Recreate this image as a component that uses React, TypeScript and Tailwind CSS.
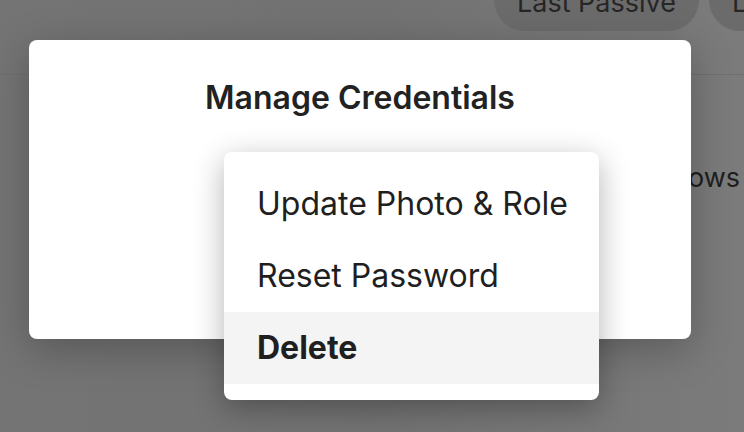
import React from "react";

const font = { fontFamily: "Inter, 'Noto Sans', sans-serif" };

function Pill(props: { label: string }) {
  return (
    <div className="flex h-[62px] shrink-0 items-center whitespace-nowrap rounded-[31px] bg-[#6b6b6b] px-[23px] pt-[6px] text-[27px] text-[#262626]">
      {props.label}
    </div>
  );
}

function MenuItem(props: { label: string; active?: boolean }) {
  return (
    <div
      className={
        props.active
          ? "flex h-[72px] items-center whitespace-nowrap bg-[#f4f4f4] px-[33px] text-[32px] font-bold text-[#1f1f1f]"
          : "flex h-[72px] items-center whitespace-nowrap px-[33px] text-[32px] text-[#1f1f1f]"
      }
    >
      {props.label}
    </div>
  );
}

export default function App() {
  return (
    <div
      className="relative h-[432px] w-[744px] overflow-hidden bg-gradient-to-r from-[#747474] via-[#727272] to-[#7b7b7b]"
      style={font}
    >
      {/* page behind the overlay */}
      <div className="flex h-[75px] items-start border-b border-[#6f6f6f]">
        <div className="h-full w-[237px] shrink-0" />
        <div className="h-full w-[33px] shrink-0 border-x border-[#727272]" />
        <div className="-mt-[31px] ml-[224px] flex shrink-0 gap-[10px]">
          <Pill label="Last Passive" />
          <Pill label="Last Active" />
        </div>
      </div>
      <div className="flex justify-end pr-[4px] pt-[83px] text-[27px] text-[#1e1e1e]">
        <span>Follows</span>
      </div>

      {/* modal */}
      <div className="absolute left-[29px] top-[40px] h-[299px] w-[662px] rounded-[8px] bg-white shadow-[0_10px_40px_rgba(0,0,0,0.25)]">
        <div className="whitespace-nowrap pt-[34px] text-center text-[32px] font-semibold text-[#222]">
          Manage Credentials
        </div>
      </div>

      {/* dropdown */}
      <div className="absolute left-[224px] top-[152px] w-[375px] rounded-[8px] bg-white py-[16px] shadow-[0_8px_30px_rgba(0,0,0,0.3)]">
        <MenuItem label="Update Photo & Role" />
        <MenuItem label="Reset Password" />
        <MenuItem label="Delete" active />
      </div>
    </div>
  );
}
